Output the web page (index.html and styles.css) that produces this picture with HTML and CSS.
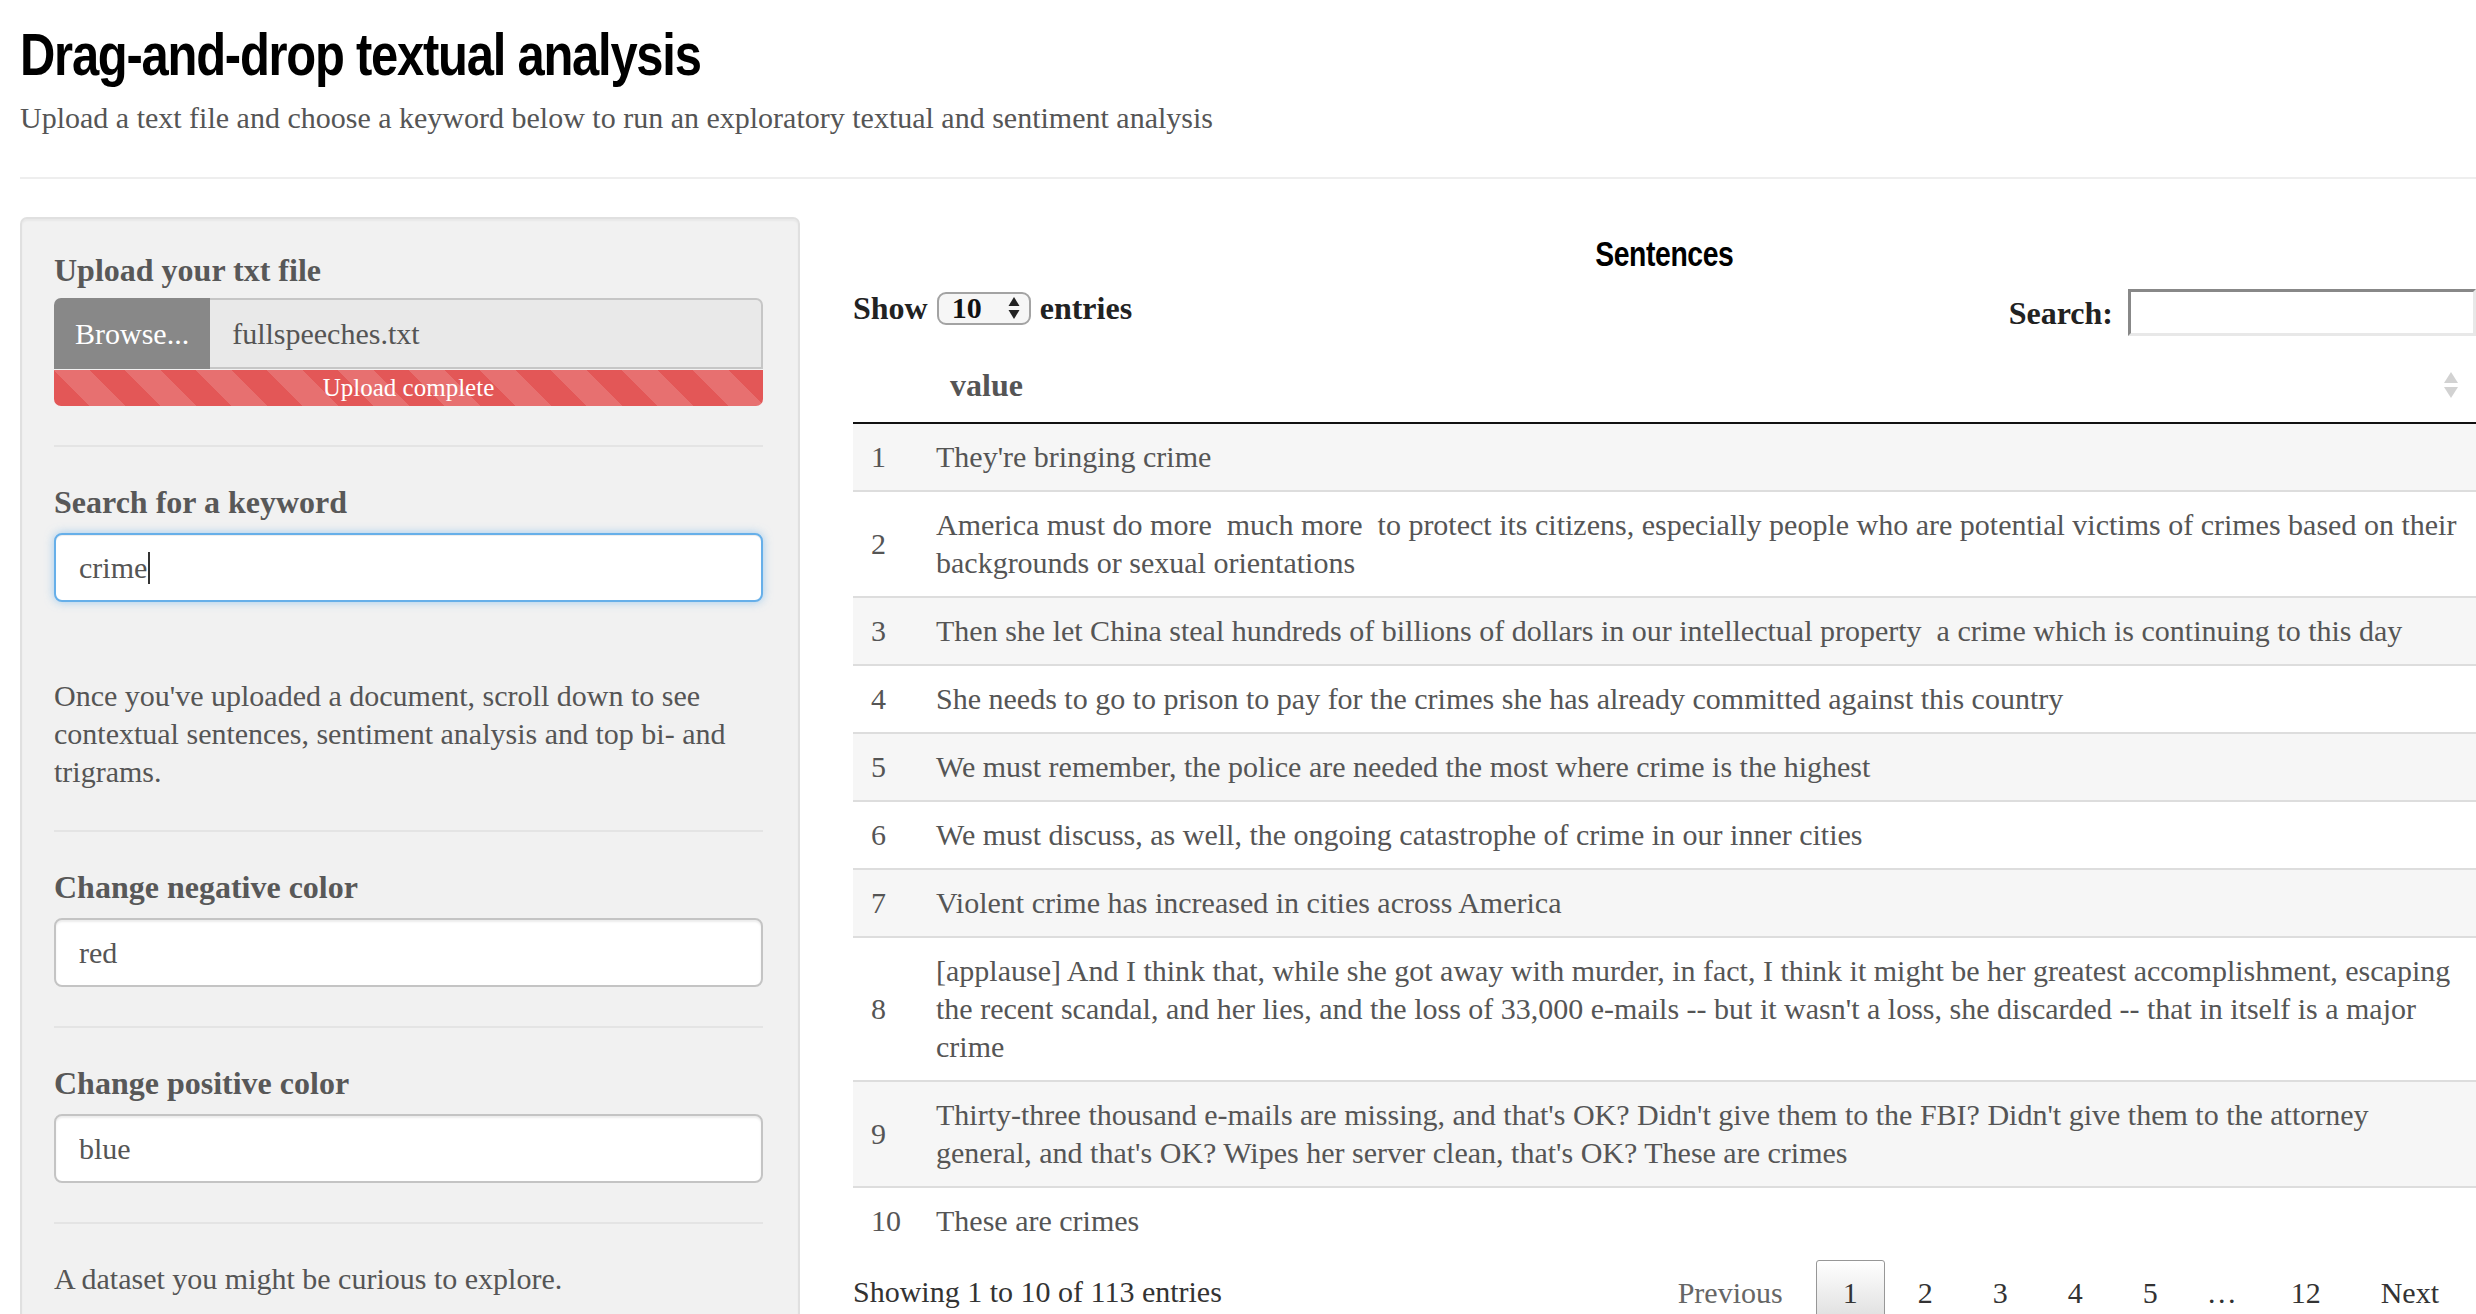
FILE: index.html
```html
<!DOCTYPE html>
<html lang="en">
<head>
<meta charset="utf-8">
<title>Drag-and-drop textual analysis</title>
<link rel="stylesheet" href="styles.css">
</head>
<body>
<div class="page">
  <header class="head">
    <h1 class="title"><span class="narrow">Drag-and-drop textual analysis</span></h1>
    <p class="lead">Upload a text file and choose a keyword below to run an exploratory textual and sentiment analysis</p>
  </header>
  <hr class="rule">
  <div class="layout">
    <aside class="well">
      <label class="label">Upload your txt file</label>
      <div class="file-group">
        <span class="browse">Browse...</span>
        <span class="filename">fullspeeches.txt</span>
      </div>
      <div class="progress">Upload complete</div>
      <hr class="sep">
      <label class="label">Search for a keyword</label>
      <div class="field field-focus">crime<span class="caret"></span></div>
      <p class="note">Once you've uploaded a document, scroll down to see contextual sentences, sentiment analysis and top bi- and trigrams.</p>
      <hr class="sep">
      <label class="label">Change negative color</label>
      <input class="field" type="text" value="red">
      <hr class="sep">
      <label class="label">Change positive color</label>
      <input class="field" type="text" value="blue">
      <hr class="sep">
      <p class="note note-last">A dataset you might be curious to explore.</p>
    </aside>
    <main class="main">
      <h4 class="section-title"><span class="narrow narrow-center">Sentences</span></h4>
      <div class="controls">
        <div class="length">
          <span>Show</span>
          <span class="select"><span>10</span><svg class="select-arrows" width="12" height="24" viewBox="0 0 12 24"><path d="M6 1 L11.5 10 L0.5 10 Z" fill="#222"/><path d="M0.5 14 L11.5 14 L6 23 Z" fill="#222"/></svg></span>
          <span>entries</span>
        </div>
        <div class="filter">
          <span>Search:</span>
          <span class="search"></span>
        </div>
      </div>
      <table class="table">
        <colgroup><col class="c-num"><col class="c-val"></colgroup>
        <thead>
          <tr><th class="th-num"></th><th class="th-val">value<svg class="sort" width="14" height="26" viewBox="0 0 14 26"><path d="M7 0 L14 11 L0 11 Z" fill="#d2d2d2"/><path d="M0 15 L14 15 L7 26 Z" fill="#d2d2d2"/></svg></th></tr>
        </thead>
        <tbody>
          <tr><td>1</td><td class="val">They're bringing crime</td></tr>
          <tr><td>2</td><td class="val">America must do more  much more  to protect its citizens, especially people who are potential victims of crimes based on their backgrounds or sexual orientations</td></tr>
          <tr><td>3</td><td class="val">Then she let China steal hundreds of billions of dollars in our intellectual property  a crime which is continuing to this day</td></tr>
          <tr><td>4</td><td class="val">She needs to go to prison to pay for the crimes she has already committed against this country</td></tr>
          <tr><td>5</td><td class="val">We must remember, the police are needed the most where crime is the highest</td></tr>
          <tr><td>6</td><td class="val">We must discuss, as well, the ongoing catastrophe of crime in our inner cities</td></tr>
          <tr><td>7</td><td class="val">Violent crime has increased in cities across America</td></tr>
          <tr><td>8</td><td class="val">[applause] And I think that, while she got away with murder, in fact, I think it might be her greatest accomplishment, escaping the recent scandal, and her lies, and the loss of 33,000 e-mails -- but it wasn't a loss, she discarded -- that in itself is a major crime</td></tr>
          <tr><td>9</td><td class="val">Thirty-three thousand e-mails are missing, and that's OK? Didn't give them to the FBI? Didn't give them to the attorney general, and that's OK? Wipes her server clean, that's OK? These are crimes</td></tr>
          <tr><td>10</td><td class="val">These are crimes</td></tr>
        </tbody>
      </table>
      <div class="table-foot">
        <div class="info">Showing 1 to 10 of 113 entries</div>
        <div class="pager">
          <span class="pg disabled">Previous</span>
          <span class="pg current">1</span>
          <span class="pg">2</span>
          <span class="pg">3</span>
          <span class="pg">4</span>
          <span class="pg">5</span>
          <span class="ellipsis">…</span>
          <span class="pg">12</span>
          <span class="pg">Next</span>
        </div>
      </div>
    </main>
  </div>
</div>
</body>
</html>
```

FILE: styles.css
```css
* { box-sizing: border-box; }

html, body {
  margin: 0;
  padding: 0;
  overflow: hidden;
}

body {
  width: 2476px;
  background: #fff;
  color: #555;
  font-family: "Liberation Serif", "Times New Roman", serif;
  font-size: 30px;
  line-height: 38px;
}

.page {
  padding-left: 20px;
}

.narrow {
  display: inline-block;
  transform: scaleX(0.815);
  transform-origin: 0 50%;
}

.narrow-center {
  transform: scaleX(0.81);
  transform-origin: 50% 50%;
}

.title {
  margin: 22px 0 0;
  font-family: "Liberation Sans", Arial, sans-serif;
  font-weight: 700;
  font-size: 60px;
  line-height: 66px;
  letter-spacing: -1.5px;
  color: #000;
  white-space: nowrap;
}

.lead {
  margin: 11px 0 0;
  color: #555;
}

.rule {
  height: 0;
  margin: 40px 0 38px;
  border: 0;
  border-top: 2px solid #eee;
}

.layout {
  display: grid;
  grid-template-columns: 780px 1623px;
  column-gap: 53px;
  align-items: start;
}

/* ---------- sidebar ---------- */
.well {
  background: #f1f1f1;
  border: 2px solid #e0e0e0;
  border-radius: 7px;
  padding: 32px 35px 80px 32px;
  box-shadow: inset 0 2px 2px rgba(0, 0, 0, 0.04);
}

.label {
  display: block;
  margin: 0;
  font-weight: 700;
  font-size: 32px;
  line-height: 38px;
  color: #585858;
}

.file-group {
  display: flex;
  height: 71px;
  margin-top: 9px;
}

.browse {
  display: flex;
  align-items: center;
  padding: 0 21px;
  background: #888;
  color: #fff;
  border-radius: 7px 0 0 0;
}

.filename {
  flex: 1;
  display: flex;
  align-items: center;
  padding-left: 22px;
  background: #e9e9e9;
  border: 2px solid #c6c6c6;
  border-left: 0;
  border-radius: 0 7px 0 0;
  color: #555;
}

.progress {
  height: 36px;
  margin-top: 1px;
  border-radius: 0 0 7px 7px;
  background-color: #e35757;
  background-image: linear-gradient(45deg,
    rgba(255, 255, 255, 0.15) 25%, transparent 25%,
    transparent 50%, rgba(255, 255, 255, 0.15) 50%,
    rgba(255, 255, 255, 0.15) 75%, transparent 75%, transparent);
  background-size: 71px 71px;
  color: #fff;
  text-align: center;
  font-size: 25px;
  line-height: 36px;
}

.sep {
  height: 0;
  margin: 39px 0 36px;
  border: 0;
  border-top: 2px solid #e4e4e4;
}

.field {
  display: block;
  width: 100%;
  height: 69px;
  margin-top: 12px;
  padding: 0 23px;
  background: #fff;
  border: 2px solid #c4c4c4;
  border-radius: 8px;
  box-shadow: inset 0 2px 2px rgba(0, 0, 0, 0.075);
  font: inherit;
  color: #555;
  outline: none;
}

.field-focus {
  display: flex;
  align-items: center;
  border-color: #66afe9;
  box-shadow: inset 0 1px 1px rgba(0, 0, 0, 0.075), 0 0 10px rgba(102, 175, 233, 0.6);
}

.caret {
  display: inline-block;
  width: 2px;
  height: 32px;
  margin-left: 1px;
  background: #333;
}

.note {
  margin: 75px 0 0;
}

.note-last {
  margin: 0;
}

/* ---------- main ---------- */
.main {
  padding-top: 17px;
}

.section-title {
  margin: 0;
  font-family: "Liberation Sans", Arial, sans-serif;
  font-weight: 700;
  font-size: 35px;
  line-height: 40px;
  letter-spacing: -0.5px;
  text-align: center;
  color: #000;
}

.controls {
  display: flex;
  justify-content: space-between;
  align-items: flex-start;
  margin-top: 15px;
}

.length {
  display: flex;
  align-items: center;
  gap: 9px;
  height: 38px;
  font-weight: 700;
  font-size: 32px;
  color: #222;
}

.select {
  display: flex;
  align-items: center;
  justify-content: space-between;
  width: 94px;
  height: 33px;
  padding: 0 9px 0 13px;
  background: #f6f6f6;
  border: 2px solid #a3a3a3;
  border-radius: 9px;
  font-size: 30px;
  color: #111;
}

.filter {
  display: flex;
  align-items: center;
  gap: 15px;
  height: 47px;
  font-weight: 700;
  font-size: 32px;
  color: #222;
}

.search {
  display: block;
  width: 348px;
  height: 47px;
  background: #fff;
  border-style: solid;
  border-width: 3px;
  border-color: #888 #e8e8e8 #e8e8e8 #888;
}

.table {
  width: 100%;
  margin-top: 12px;
  table-layout: fixed;
  border-collapse: separate;
  border-spacing: 0;
}

.c-num { width: 65px; }

.table th {
  position: relative;
  padding: 18px 32px;
  text-align: left;
  font-weight: 700;
  font-size: 32px;
  line-height: 38px;
  color: #555;
  border-bottom: 2px solid #111;
}

.table th.th-num {
  padding: 18px;
}

.sort {
  position: absolute;
  right: 18px;
  top: 24px;
}

.table td {
  padding: 14px 18px;
  vertical-align: middle;
  border-top: 2px solid #ddd;
  color: #555;
}

.table td.val {
  white-space: pre-wrap;
}

.table tbody tr:first-child td {
  border-top: 0;
}

.table tbody tr:nth-child(odd) {
  background: #f6f6f6;
}

.table-foot {
  display: flex;
  justify-content: space-between;
  align-items: flex-start;
}

.info {
  margin-top: 19px;
  color: #333;
}

.pager {
  display: flex;
  margin-top: 6px;
  margin-right: 10px;
}

.pg {
  margin-left: 6px;
  padding: 13px 26px;
  border: 1px solid transparent;
  border-radius: 3px;
  color: #333;
}

.pg.disabled {
  color: #666;
}

.pg.current {
  border-color: #979797;
  background: linear-gradient(to bottom, #fff 0%, #dcdcdc 100%);
}

.ellipsis {
  margin-left: 6px;
  padding: 14px 21px 14px 16px;
  color: #333;
}
```
